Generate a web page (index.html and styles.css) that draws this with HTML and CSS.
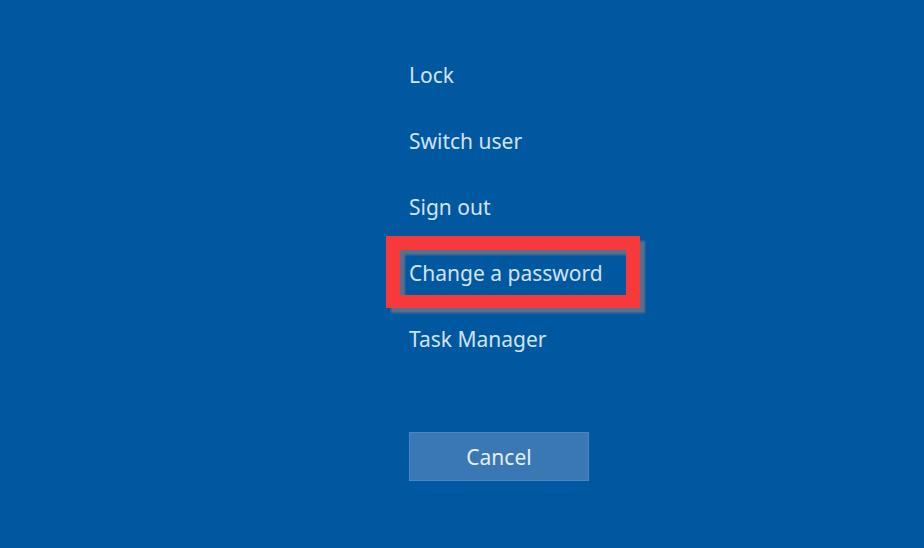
FILE: index.html
```html
<!DOCTYPE html>
<html lang="en">
  <head>
    <meta charset="UTF-8" />
    <meta name="viewport" content="width=device-width, initial-scale=1.0" />
    <title>Security options</title>
    <link rel="stylesheet" href="styles.css">
  </head>
  <body>
    <div class="screen">
      <ul class="options">
        <li class="option">Lock</li>
        <li class="option">Switch user</li>
        <li class="option">Sign out</li>
        <li class="option highlighted">Change a password</li>
        <li class="option">Task Manager</li>
      </ul>
      <button class="cancel" type="button">Cancel</button>
    </div>
  </body>
</html>
```

FILE: styles.css
```css
html,
body {
  margin: 0;
  height: 100%;
}
body {
  font-family: 'Noto Sans', 'Open Sans', sans-serif;
  background-color: #0058a0;
  color: #d3e3f4;
}
.screen {
  height: 100%;
  padding: 42px 0 0 409px;
  box-sizing: border-box;
}
.options {
  list-style-type: none;
  margin: 0;
  padding: 0;
}
.option {
  height: 66px;
  line-height: 66px;
  font-size: 21px;
  white-space: nowrap;
}
.highlighted {
  position: relative;
}
.highlighted:after {
  content: '';
  position: absolute;
  left: -23px;
  top: -4px;
  width: 254px;
  height: 72px;
  box-sizing: border-box;
  border: 14px solid #f63a3c;
  border-bottom-width: 13px;
  filter: drop-shadow(5px 5px 1px #5a6e8e);
}
.cancel {
  display: block;
  margin-top: 60px;
  width: 180px;
  height: 49px;
  padding: 0;
  border: 1px solid #4a86c0;
  background-color: #3a78b4;
  color: #e6eef8;
  font-family: inherit;
  font-size: 21px;
  cursor: pointer;
}
```
